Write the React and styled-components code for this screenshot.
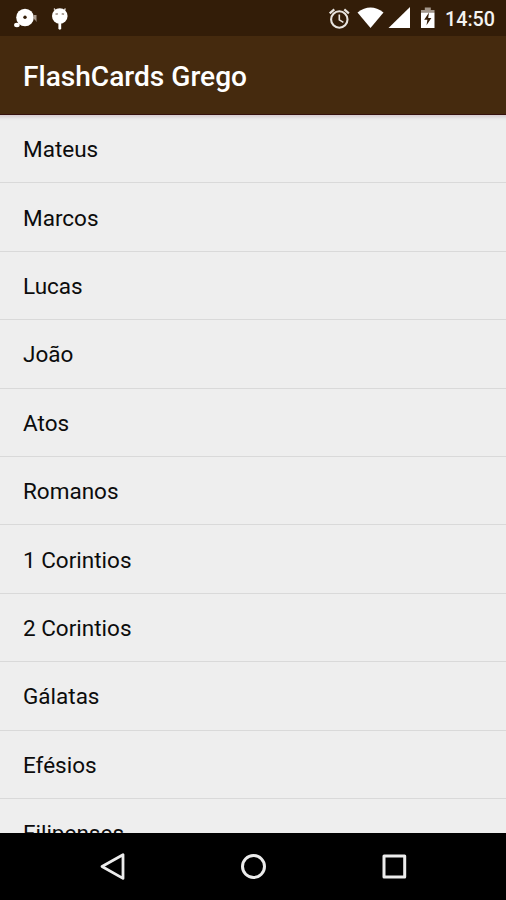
import React from 'react';
import styled, { createGlobalStyle, ThemeProvider } from 'styled-components'

const GlobalStyle = createGlobalStyle`
  * {
    box-sizing: border-box;
  }
  body {
    margin: 0;
    background: #000;
    font-family: Roboto, "Liberation Sans", sans-serif;
  }
`

const theme = {
  colors: {
    statusBar: '#331d08',
    primary: '#452a0e',
    background: '#eeeeee',
    divider: '#d9d9d9',
    text: '#0c0c0c',
  }
}

const Screen = styled.div`
  display: flex;
  flex-direction: column;
  width: 506px;
  height: 900px;
  overflow: hidden;
`

const StatusBar = styled.div`
  display: flex;
  flex: none;
  justify-content: space-between;
  height: 36px;
  background: ${({ theme }) => theme.colors.statusBar};
`

const Icon = styled.svg`
  display: block;
  flex: none;
  width: ${({ $width }) => $width}px;
  height: 36px;
`

const StatusGroup = styled.div`
  display: flex;
  align-items: center;
`

const Clock = styled.span`
  width: 61px;
  padding-top: 3px;
  color: #f5f3f1;
  font-size: 19.7px;
  font-weight: 500;
  line-height: 33px;
  white-space: nowrap;
`

const AppBar = styled.header`
  display: flex;
  flex: none;
  align-items: center;
  height: 79px;
  padding: 4px 23px 0;
  background: ${({ theme }) => theme.colors.primary};
  border-bottom: 1px solid #35100c;
`

const Title = styled.h1`
  margin: 0;
  color: #fff;
  font-size: 28.1px;
  font-weight: 500;
  line-height: 36px;
`

const BookList = styled.ul`
  flex: 1;
  min-height: 0;
  margin: 0;
  padding: 0;
  overflow: hidden;
  list-style: none;
  background: linear-gradient(#d6cdd0, #dfdadc 2px, #eaeaea 4px, ${({ theme }) => theme.colors.background} 6px);
`

const BookItem = styled.li`
  display: flex;
  align-items: center;
  height: 68.4px;
  padding: 1px 23px 0;
  color: ${({ theme }) => theme.colors.text};
  font-size: 22.5px;
  border-bottom: 1px solid ${({ theme }) => theme.colors.divider};
`

const NavBar = styled.nav`
  display: flex;
  flex: none;
  justify-content: center;
  gap: 92.5px;
  height: 67px;
  background: #000;
`

const NavButton = styled.button`
  width: 48px;
  height: 67px;
  padding: 0;
  border: 0;
  background: none;

  svg {
    display: block;
    fill: none;
    stroke: #ececec;
    stroke-width: 3;
    stroke-linejoin: round;
  }
`

const livros = [
  'Mateus',
  'Marcos',
  'Lucas',
  'João',
  'Atos',
  'Romanos',
  '1 Corintios',
  '2 Corintios',
  'Gálatas',
  'Efésios',
  'Filipenses',
]

function NotificationIcons() {
  return (
    <Icon $width={80} viewBox="0 0 80 36">
      {/* disco */}
      <circle cx="25" cy="17.5" r="8.8" fill="#fff" />
      <circle cx="25" cy="17.2" r="1.7" fill="#331d08" />
      <ellipse cx="16.9" cy="25" rx="2.8" ry="2.2" fill="#fff" />
      <path d="M33.5 15h3v7l-1.6-2.5h-1.4z" fill="#a99b8f" />
      {/* robo */}
      <path d="M54 8.5l3 4M65.5 8.5l-3 4" stroke="#d8d0c9" strokeWidth="1.3" />
      <circle cx="59.8" cy="16" r="7.8" fill="#fff" />
      <path d="M55.5 14.2l2.4-.4M61.7 13.8l2.4.4" stroke="#85776b" strokeWidth="1.3" />
      <path d="M59.8 22v6.3" stroke="#fff" strokeWidth="2.8" strokeLinecap="round" />
    </Icon>
  )
}

function SystemIcons() {
  return (
    <Icon $width={121} viewBox="324 0 121 36">
      {/* alarme */}
      <g fill="none" stroke="#e8e4df">
        <circle cx="339.3" cy="19.5" r="8.2" strokeWidth="2.1" />
        <path d="M339.3 14.5v5.4l4.1 2.5" strokeWidth="1.6" />
        <path d="M329.7 13.3l4.6-3.9M348.9 13.3l-4.6-3.9" strokeWidth="2.2" />
      </g>
      {/* wifi */}
      <path d="M357.5 12.4Q370.5 2.6 383.5 12.4L370.5 28z" fill="#fff" />
      {/* sinal */}
      <path d="M388.5 28L410 7v21z" fill="#fff" />
      {/* bateria */}
      <path d="M421 12.5V10h3.8V7.5h6V10h3.7v2.5z" fill="#a3978b" />
      <path d="M421 12.5h13.5V28H421z" fill="#fff" />
      <path d="M429 12.5l-4.8 7.3h3.2l-.9 5.4 4.9-7.3h-3.2z" fill="#331d08" />
    </Icon>
  )
}

export default function App() {
  return (
    <ThemeProvider theme={theme}>
      <GlobalStyle />
      <Screen>
        <StatusBar>
          <NotificationIcons />
          <StatusGroup>
            <SystemIcons />
            <Clock>14:50</Clock>
          </StatusGroup>
        </StatusBar>

        <AppBar>
          <Title>FlashCards Grego</Title>
        </AppBar>

        <BookList>
          {livros.map((livro) => {
            return <BookItem key={livro}>{livro}</BookItem>
          })}
        </BookList>

        <NavBar>
          <NavButton aria-label="Voltar">
            <svg width="48" height="67" viewBox="0 0 48 67">
              <path d="M13 33.5L34 21.8v23.6z" strokeWidth="2.8" />
            </svg>
          </NavButton>
          <NavButton aria-label="Início">
            <svg width="48" height="67" viewBox="0 0 48 67">
              <circle cx="24.5" cy="33.5" r="11" />
            </svg>
          </NavButton>
          <NavButton aria-label="Recentes">
            <svg width="48" height="67" viewBox="0 0 48 67">
              <path d="M14 23h20.7v21H14z" />
            </svg>
          </NavButton>
        </NavBar>
      </Screen>
    </ThemeProvider>
  )
}
